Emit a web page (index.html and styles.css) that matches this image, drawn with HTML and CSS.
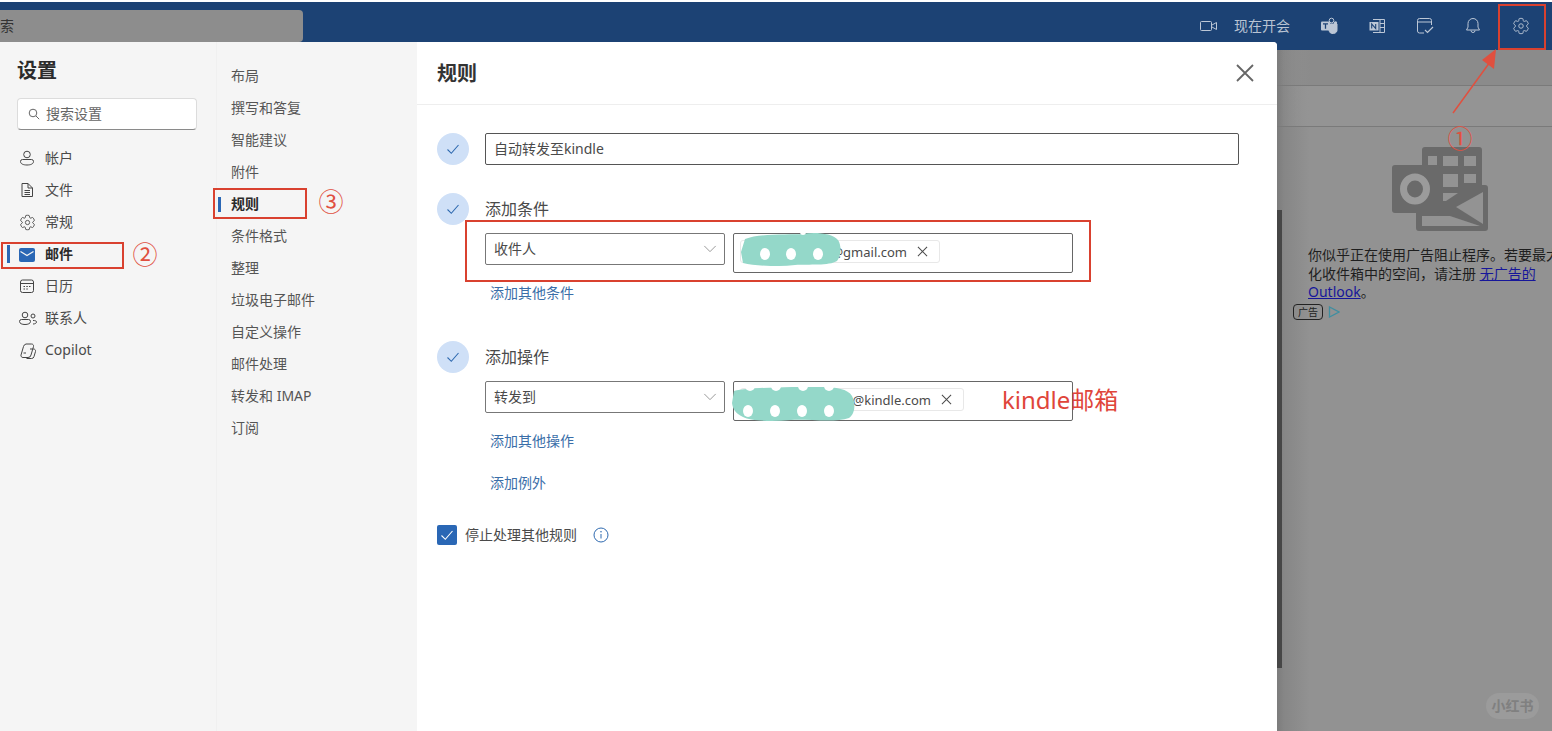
FILE: index.html
```html
<!DOCTYPE html>
<html lang="zh-CN">
<head>
<meta charset="utf-8">
<title>规则</title>
<link rel="stylesheet" href="styles.css">
</head>
<body>
<svg class="defs" width="0" height="0" aria-hidden="true">
  <symbol id="gear" viewBox="0 0 20 20">
    <path fill="none" stroke="currentColor" d="M1.91 7.38A8.5 8.5 0 0 1 3.7 4.28a.5.5 0 0 1 .54-.13l1.92.68a1 1 0 0 0 1.32-.76l.36-2a.5.5 0 0 1 .4-.4 8.53 8.53 0 0 1 3.55 0c.2.04.35.2.38.4l.37 2a1 1 0 0 0 1.32.76l1.92-.68a.5.5 0 0 1 .54.13 8.5 8.5 0 0 1 1.78 3.1c.06.2 0 .4-.15.54l-1.56 1.32a1 1 0 0 0 0 1.52l1.56 1.32a.5.5 0 0 1 .15.54 8.5 8.5 0 0 1-1.78 3.1.5.5 0 0 1-.54.14l-1.92-.68a1 1 0 0 0-1.32.76l-.37 2a.5.5 0 0 1-.38.4 8.53 8.53 0 0 1-3.56 0 .5.5 0 0 1-.39-.4l-.36-2a1 1 0 0 0-1.32-.76l-1.92.68a.5.5 0 0 1-.54-.13 8.5 8.5 0 0 1-1.78-3.1.5.5 0 0 1 .15-.55l1.56-1.32a1 1 0 0 0 0-1.52L2.06 7.92a.5.5 0 0 1-.15-.54Z"/>
    <circle cx="10" cy="10" r="2.5" fill="none" stroke="currentColor"/>
  </symbol>
  <symbol id="check" viewBox="0 0 16 16">
    <path d="M2.5 8.5 6.3 12.3 13.5 4" fill="none" stroke="currentColor" stroke-width="1.1"/>
  </symbol>
  <symbol id="chev" viewBox="0 0 16 16">
    <path d="M1.5 4.5 8 11l6.5-6.5" fill="none" stroke="currentColor"/>
  </symbol>
  <symbol id="cross" viewBox="0 0 12 12">
    <path d="M1 1l10 10M11 1 1 11" fill="none" stroke="currentColor" stroke-width="1.1"/>
  </symbol>
</svg>

<header class="topbar">
  <div class="search"><span class="search-text">搜索</span></div>
  <div class="tools">
    <svg class="video" width="18" height="12" viewBox="0 0 18 12"><rect x=".5" y="1.5" width="11" height="9" rx="1" fill="none" stroke="currentColor"/><path d="M12 5 16.500 2.500V9.500L12 7" fill="none" stroke="currentColor"/></svg>
    <span class="meet">现在开会</span>
    <span class="tool">
      <svg width="18" height="18" viewBox="0 0 18 18"><circle cx="11.500" cy="3.500" r="2.300" fill="none" stroke="currentColor"/><circle cx="15.500" cy="6" r="1.700" fill="currentColor"/><path d="M7 7h10v5a4 4 0 0 1-8 1" fill="currentColor" stroke="currentColor"/><rect x="1" y="4.500" width="9" height="9" rx="1" fill="currentColor"/><path d="M3 6.800h5M5.500 6.800v5" stroke="#1c4274" stroke-width="1.300"/></svg>
    </span>
    <span class="tool">
      <svg width="18" height="18" viewBox="0 0 18 18"><path d="M5 2.500h11.500v13H5" fill="none" stroke="currentColor"/><path d="M12 2.500v13M12 6.500h4.500M12 10.500h4.500" stroke="currentColor"/><rect x="1.500" y="5" width="9" height="8.500" fill="currentColor"/><path d="M3.700 11.500v-4.500l4 4.500v-4.500" fill="none" stroke="#1c4274" stroke-width="1.100"/></svg>
    </span>
    <span class="tool">
      <svg width="18" height="18" viewBox="0 0 18 18"><path d="M8 16H3.500a2 2 0 0 1-2-2V3.500a2 2 0 0 1 2-2h10a2 2 0 0 1 2 2V8" fill="none" stroke="currentColor"/><path d="M1.500 5h14" stroke="currentColor"/><path d="M9 13l2.500 2.500L17 10" fill="none" stroke="currentColor" stroke-width="1.200"/></svg>
    </span>
    <span class="tool">
      <svg width="18" height="18" viewBox="0 0 18 18"><path d="M9 1.500a5 5 0 0 0-5 5v3.600L2.500 13h13L14 10.100V6.500a5 5 0 0 0-5-5Z" fill="none" stroke="currentColor"/><path d="M7 13.500a2 2 0 0 0 4 0" fill="none" stroke="currentColor"/></svg>
    </span>
    <span class="tool">
      <svg width="18" height="18"><use href="#gear"/></svg>
    </span>
  </div>
</header>

<main class="backdrop">
  <div class="band band-one"></div>
  <div class="band band-two"></div>
  <aside class="ad">
    <svg class="ad-logo" width="97" height="84" viewBox="0 0 97 84">
      <path fill="#6a6a6a" d="M33 0h54a3 3 0 0 1 3 3v35l3 0a3 3 0 0 1 3 3v40a3 3 0 0 1-3 3H27a3 3 0 0 1-3-3V60h6V30h0V3a3 3 0 0 1 3-3Z"/>
      <g fill="#939393">
        <rect x="36" y="9" width="9" height="10"/><rect x="51" y="9" width="15" height="10"/><rect x="72" y="9" width="12" height="10"/>
        <rect x="51" y="27" width="15" height="13"/><rect x="72" y="27" width="12" height="9"/>
        <path d="M51 46h15L54 54h-3Z"/>
        <path d="M91 45v32L64 60Z"/>
        <path d="M30 69h28l30 10H30Z"/>
      </g>
      <rect x="0" y="18" width="48" height="48" rx="3" fill="#6a6a6a"/>
      <ellipse cx="23" cy="42" rx="11.500" ry="12" fill="none" stroke="#9b9b9b" stroke-width="7"/>
    </svg>
    <p class="ad-text">你似乎正在使用广告阻止程序。若要最大化收件箱中的空间，请注册 <a href="#ad">无广告的 Outlook</a>。</p>
    <div class="ad-tag">
      <span class="ad-badge">广告</span>
      <svg width="12" height="12" viewBox="0 0 12 12"><path d="M1.500 1v10L11 6Z" fill="none" stroke="#3f8ea0" stroke-width="1.300"/></svg>
    </div>
  </aside>
  <div class="scrollbar"></div>
  <span class="watermark">小红书</span>
</main>

<section class="dialog">
  <nav class="nav">
    <h1 class="nav-title">设置</h1>
    <div class="nav-search">
      <svg width="12" height="12" viewBox="0 0 12 12"><circle cx="5" cy="5" r="3.800" fill="none" stroke="#666"/><path d="M8 8l3.200 3.200" stroke="#666"/></svg>
      <span>搜索设置</span>
    </div>
    <ul class="nav-list">
      <li class="nav-item"><svg class="nav-icon" width="16" height="16" viewBox="0 0 16 16"><circle cx="8" cy="4.500" r="3.300" fill="none" stroke="currentColor"/><path d="M3.500 9.500h9a2 2 0 0 1 2 2c0 2.500-3 3.500-6.500 3.500s-6.500-1-6.500-3.500a2 2 0 0 1 2-2Z" fill="none" stroke="currentColor"/></svg>帐户</li>
      <li class="nav-item"><svg class="nav-icon" width="16" height="16" viewBox="0 0 16 16"><path d="M3 1.500h6l4.500 4.500v8.500H3Z" fill="none" stroke="currentColor"/><path d="M9 1.500V6h4.500M5.500 8.500h5.500M5.500 10.500h5.500M5.500 12.500h5.500" fill="none" stroke="currentColor"/></svg>文件</li>
      <li class="nav-item"><svg class="nav-icon" width="17" height="17"><use href="#gear"/></svg>常规</li>
      <li class="nav-item active"><svg class="nav-icon" width="16" height="14" viewBox="0 0 16 14"><rect width="16" height="14" rx="2" fill="#2a67b5"/><path d="M1.500 3.500 8 7.500l6.500-4" fill="none" stroke="#f5f5f5" stroke-width="1.200"/></svg>邮件</li>
      <li class="nav-item"><svg class="nav-icon" width="16" height="16" viewBox="0 0 16 16"><rect x="1.500" y="2" width="13" height="12.500" rx="2" fill="none" stroke="currentColor"/><path d="M1.500 5.500h13" stroke="currentColor"/><path d="M4.500 8.500h1.500M7.300 8.500h1.500M10 8.500h1.500M4.500 11h1.500M7.300 11h1.500" stroke="currentColor" stroke-width="1.200"/></svg>日历</li>
      <li class="nav-item"><svg class="nav-icon" width="18" height="16" viewBox="0 0 18 16"><circle cx="6" cy="5" r="2.800" fill="none" stroke="currentColor"/><path d="M2.500 9.500h7a2 2 0 0 1 2 2c0 2-2.500 3-5.500 3s-5.500-1-5.500-3a2 2 0 0 1 2-2Z" fill="none" stroke="currentColor"/><circle cx="14" cy="6" r="2" fill="none" stroke="currentColor"/><path d="M14 10.500c2 0 3.500.3 3.500 1.500s-1.500 2-3.500 2" fill="none" stroke="currentColor"/></svg>联系人</li>
      <li class="nav-item"><svg class="nav-icon" width="18" height="18" viewBox="0 0 18 18"><path d="M7 2h5.500a2 2 0 0 1 2 2.500L12 13a3 3 0 0 1-3 2.500H4a2 2 0 0 1-2-2.500l2.500-8.500A3.500 3.500 0 0 1 7 2Z" fill="none" stroke="currentColor"/><path d="M11 7h3.500a2 2 0 0 1 2 2.500l-1.500 5a2.500 2.500 0 0 1-2.500 2H7.500M7 11H4.500" fill="none" stroke="currentColor"/></svg>Copilot</li>
    </ul>
  </nav>

  <ul class="subnav">
    <li class="sub-item">布局</li>
    <li class="sub-item">撰写和答复</li>
    <li class="sub-item">智能建议</li>
    <li class="sub-item">附件</li>
    <li class="sub-item active">规则</li>
    <li class="sub-item">条件格式</li>
    <li class="sub-item">整理</li>
    <li class="sub-item">垃圾电子邮件</li>
    <li class="sub-item">自定义操作</li>
    <li class="sub-item">邮件处理</li>
    <li class="sub-item">转发和 IMAP</li>
    <li class="sub-item">订阅</li>
  </ul>

  <div class="panel">
    <div class="panel-head">
      <h2 class="panel-title">规则</h2>
      <svg class="close" width="18" height="18" viewBox="0 0 18 18"><path d="M1 1l16 16M17 1 1 17" stroke="#666" stroke-width="1.800" fill="none"/></svg>
    </div>
    <div class="panel-body">
      <div class="step">
        <span class="step-mark"><svg width="16" height="16"><use href="#check"/></svg></span>
        <div class="step-main"><div class="name-input">自动转发至kindle</div></div>
      </div>

      <div class="step step-gap">
        <span class="step-mark"><svg width="16" height="16"><use href="#check"/></svg></span>
        <div class="step-main">
          <div class="step-label">添加条件</div>
          <div class="fields">
            <div class="select">收件人<svg class="chev" width="14" height="14"><use href="#chev"/></svg></div>
            <div class="tags">
              <span class="chip chip-short">@gmail.com<svg width="11" height="11"><use href="#cross"/></svg></span>
              <svg class="blob blob-a" width="101" height="34" viewBox="0 0 101 34">
                <path fill="#94d8c9" d="M5 7C20 1 50 3 62 2 75 0 92 1 98 8c4 6 3 16-1 21-8 5-28 3-42 4-18 2-40 1-52-2L1 20Z"/>
                <g fill="#fff"><ellipse cx="25" cy="22" rx="5" ry="6"/><ellipse cx="51" cy="22" rx="5" ry="6"/><ellipse cx="78" cy="22" rx="5" ry="6"/><circle cx="63" cy="0" r="3"/></g>
              </svg>
            </div>
          </div>
          <a class="link link-first" href="#c">添加其他条件</a>
        </div>
      </div>

      <div class="step step-gap-wide">
        <span class="step-mark"><svg width="16" height="16"><use href="#check"/></svg></span>
        <div class="step-main">
          <div class="step-label">添加操作</div>
          <div class="fields">
            <div class="select">转发到<svg class="chev" width="14" height="14"><use href="#chev"/></svg></div>
            <div class="tags">
              <span class="chip chip-long">@kindle.com<svg width="11" height="11"><use href="#cross"/></svg></span>
              <svg class="blob blob-b" width="124" height="38" viewBox="0 0 124 38">
                <path fill="#94d8c9" d="M2 6C20 2 60 2 90 2c14 0 26 2 30 9 4 8 3 18-3 22-14 5-40 1-58 2-20 2-40 1-48-3C3 28 1 24 0 18Z"/>
                <g fill="#fff"><circle cx="18" cy="1" r="5"/><circle cx="44" cy="1" r="5"/><circle cx="71" cy="1" r="5"/><circle cx="97" cy="1" r="5"/><ellipse cx="16" cy="26" rx="5" ry="6"/><ellipse cx="43" cy="26" rx="5" ry="6"/><ellipse cx="70" cy="26" rx="5" ry="6"/><ellipse cx="97" cy="26" rx="5" ry="6"/></g>
              </svg>
            </div>
          </div>
          <a class="link link-first" href="#a">添加其他操作</a>
          <a class="link link-next" href="#e">添加例外</a>
        </div>
      </div>

      <div class="stop">
        <span class="checkbox"><svg width="16" height="16"><use href="#check"/></svg></span>
        <span>停止处理其他规则</span>
        <svg class="info" width="16" height="16" viewBox="0 0 16 16"><circle cx="8" cy="8" r="7" fill="none" stroke="#2f6ab0"/><path d="M8 7v4.500" stroke="#2f6ab0"/><circle cx="8" cy="4.800" r=".8" fill="#2f6ab0"/></svg>
      </div>
    </div>
  </div>
</section>

<div class="mark box-gear"></div>
<div class="mark box-mail"></div>
<div class="mark box-rule"></div>
<div class="mark box-cond"></div>
<span class="num num-one">①</span>
<span class="num num-two">②</span>
<span class="num num-three">③</span>
<span class="note">kindle邮箱</span>
<svg class="arrow" width="50" height="66" viewBox="0 0 50 66"><path d="M1 65 38 14" stroke="#e0503f" stroke-width="1.500" fill="none"/><path d="M44 1 42 21 30 12Z" fill="#e0503f"/></svg>
</body>
</html>
```

FILE: styles.css
```css
* { box-sizing: border-box; }

html, body {
  margin: 0;
  height: 731px;
  overflow: hidden;
}

body {
  position: relative;
  display: flex;
  flex-direction: column;
  width: 1552px;
  padding-top: 2px;
  background: #fff;
  font: 14px/20px "Noto Sans", "Noto Sans CJK SC", sans-serif;
  color: #4a4a4a;
}

ul { list-style: none; margin: 0; padding: 0; }
h1, h2, p { margin: 0; }
a { text-decoration: none; }
.defs { position: absolute; }

/* top bar */
.topbar {
  flex: none;
  height: 48px;
  display: flex;
  justify-content: space-between;
  background: #1c4274;
  color: #bcc7d6;
}

.search {
  width: 303px;
  height: 32px;
  margin-top: 8px;
  overflow: hidden;
  background: #8d8d8d;
  border-radius: 0 4px 4px 0;
  color: #333;
  line-height: 32px;
  white-space: nowrap;
}

.search-text { margin-left: -14px; }

.tools {
  display: flex;
  align-items: center;
  padding-right: 7px;
  padding-bottom: 1px;
}

.video { margin-right: 16px; }
.meet { margin-right: 15px; color: #b9c4d3; }

.tool {
  width: 48px;
  display: flex;
  justify-content: center;
}

/* page behind the dialog */
.backdrop {
  flex: 1;
  position: relative;
  display: flex;
  flex-direction: column;
  background: linear-gradient(90deg, #7c7c7c 1277px, #868686 1284px, #929292 1310px);
  overflow: hidden;
}

.band { border-bottom: 1px solid #7a7a7a; }
.band-one { height: 36px; background: linear-gradient(90deg, transparent 1280px, #8b8b8b 1310px); }
.band-two { height: 41px; background: linear-gradient(90deg, transparent 1280px, #949494 1310px); }

.ad {
  margin: 20px 0 0 1293px;
  width: 259px;
}

.ad-logo { display: block; margin-left: 99px; }

.ad-text {
  width: 252px;
  margin: 15px 0 0 15px;
  color: #1e1e1e;
  line-height: 18.500px;
}

.ad-text a { color: #16169a; text-decoration: underline; }

.ad-tag {
  display: flex;
  align-items: center;
  gap: 5px;
  margin-top: 2px;
}

.ad-badge {
  width: 30px;
  height: 16px;
  border: 1px solid #222;
  border-radius: 4px;
  color: #222;
  font-size: 10px;
  line-height: 14px;
  text-align: center;
}

.scrollbar {
  position: absolute;
  left: 1277px;
  top: 160px;
  width: 5px;
  height: 458px;
  background: #464646;
}

.watermark {
  position: absolute;
  left: 1486px;
  top: 643px;
  width: 53px;
  height: 26px;
  border-radius: 13px;
  background: #9b9b9b;
  color: #808080;
  font-size: 14px;
  font-weight: 700;
  line-height: 26px;
  text-align: center;
}

/* settings dialog */
.dialog {
  position: absolute;
  left: 0;
  top: 42px;
  width: 1277px;
  height: 689px;
  display: flex;
  background: #f5f5f5;
  border-radius: 0 4px 0 0;
  overflow: hidden;
}

.nav {
  flex: none;
  width: 217px;
  padding: 15px 0 0;
  border-right: 1px solid #f0f0f0;
}

.nav-title {
  margin-left: 17px;
  font-size: 20px;
  font-weight: 700;
  line-height: 28px;
  color: #2b2b2b;
}

.nav-search {
  display: flex;
  align-items: center;
  gap: 6px;
  width: 180px;
  height: 32px;
  margin: 13px 0 12px 17px;
  padding-left: 10px;
  background: #fff;
  border: 1px solid #dcdcdc;
  border-bottom-color: #8a8a8a;
  border-radius: 4px;
  color: #666;
}

.nav-item {
  position: relative;
  display: flex;
  align-items: center;
  height: 32px;
  padding-left: 45px;
}

.nav-icon {
  position: absolute;
  left: 19px;
  top: 8px;
  color: #444;
}

.nav-item.active { font-weight: 700; color: #2b2b2b; }
.nav-item.active .nav-icon { top: 10px; }

.nav-item.active::before {
  content: "";
  position: absolute;
  left: 7px;
  top: 7px;
  width: 3px;
  height: 18px;
  background: #2a67b5;
}

.subnav {
  flex: none;
  width: 200px;
  padding-top: 17.500px;
  padding-left: 14px;
  color: #555;
}

.sub-item {
  position: relative;
  height: 32px;
  line-height: 32px;
}

.sub-item.active { font-weight: 700; color: #2b2b2b; }

.sub-item.active::before {
  content: "";
  position: absolute;
  left: -13px;
  top: 9px;
  width: 3px;
  height: 15px;
  background: #2a67b5;
}

/* rule panel */
.panel {
  flex: 1;
  background: #fff;
}

.panel-head {
  display: flex;
  align-items: center;
  justify-content: space-between;
  height: 63px;
  padding: 0 23px 0 20px;
  border-bottom: 1px solid #eee;
}

.panel-title {
  margin-top: 2px;
  font-size: 20px;
  font-weight: 700;
  line-height: 28px;
  color: #333;
}

.panel-body { padding: 28px 0 0 20px; }

.step { display: flex; gap: 16px; }
.step-gap { margin-top: 28px; }
.step-gap-wide { margin-top: 38px; }

.step-mark {
  flex: none;
  width: 32px;
  height: 32px;
  display: flex;
  align-items: center;
  justify-content: center;
  border-radius: 50%;
  background: #cfe0f7;
  color: #2f6ab0;
}

.step-main { display: flex; flex-direction: column; align-items: flex-start; }

.name-input {
  width: 754px;
  height: 32px;
  padding-left: 8px;
  border: 1px solid #555;
  border-radius: 2px;
  line-height: 30px;
}

.step-label {
  font-size: 16px;
  line-height: 32px;
}

.fields {
  display: flex;
  align-items: flex-start;
  gap: 8px;
  margin-top: 8px;
}

.select {
  display: flex;
  align-items: center;
  justify-content: space-between;
  width: 240px;
  height: 32px;
  padding: 0 7px 0 8px;
  border: 1px solid #777;
  border-radius: 2px;
}

.chev { color: #8a8a8a; }

.tags {
  position: relative;
  width: 340px;
  height: 40px;
  padding: 6px;
  border: 1px solid #666;
  border-radius: 2px;
}

.chip {
  display: flex;
  align-items: center;
  justify-content: flex-end;
  gap: 10px;
  height: 23px;
  padding-right: 11px;
  border: 1px solid #e8e8e8;
  border-radius: 3px;
  font-size: 13px;
}

.chip-short { width: 200px; }
.chip-long { width: 224px; }

.blob { position: absolute; }
.blob-a { left: 6px; top: -2px; }
.blob-b { left: -2px; top: 3px; }

.link {
  display: block;
  height: 20px;
  margin-left: 5px;
  color: #3a6ea8;
}

.link-first { margin-top: 10px; }
.link-next { margin-top: 22px; }

.stop {
  display: flex;
  align-items: center;
  gap: 8px;
  margin-top: 32px;
}

.checkbox {
  width: 20px;
  height: 20px;
  display: flex;
  align-items: center;
  justify-content: center;
  border-radius: 2px;
  background: #2a67b5;
  color: #fff;
}

.info { margin-left: 8px; }

/* red annotations */
.mark {
  position: absolute;
  border: 2px solid #d9412f;
}

.box-gear { left: 1498px; top: 4px; width: 48px; height: 46px; }
.box-mail { left: 1px; top: 242px; width: 123px; height: 27px; }
.box-rule { left: 213px; top: 188px; width: 94px; height: 31px; }
.box-cond { left: 465px; top: 220px; width: 626px; height: 62px; }

.num {
  position: absolute;
  width: 28px;
  font-family: "Noto Sans CJK SC", sans-serif;
  font-size: 25px;
  line-height: 28px;
  text-align: center;
  color: #e0503f;
}

.num-one { left: 1446px; top: 123px; }
.num-two { left: 131px; top: 239px; }
.num-three { left: 317px; top: 186px; }

.note {
  position: absolute;
  left: 1002px;
  top: 384px;
  font-size: 24px;
  line-height: 32px;
  color: #e0453a;
}

.arrow {
  position: absolute;
  left: 1452px;
  top: 48px;
}
```
